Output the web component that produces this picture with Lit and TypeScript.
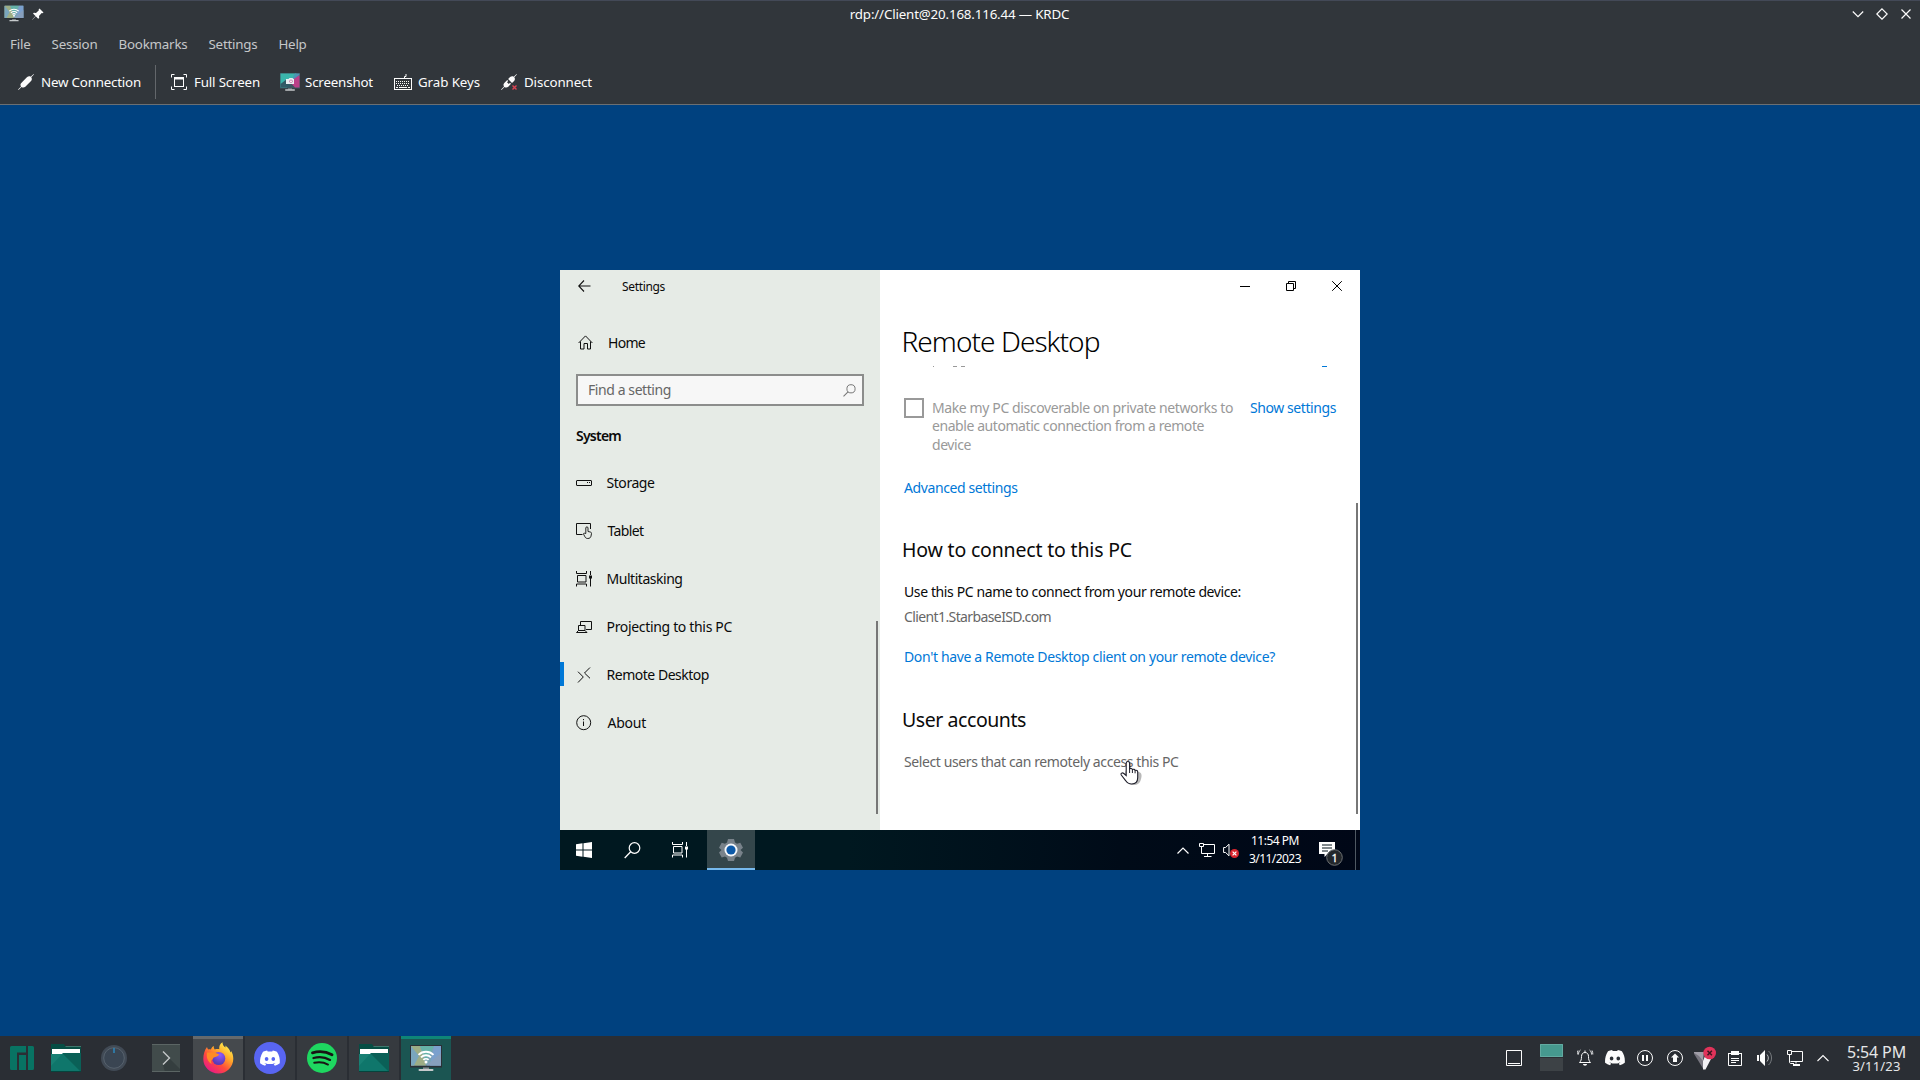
import { LitElement, html, css, svg } from "lit";
import { customElement, property } from "lit/decorators.js";

/* A single line of text whose tracking is adjusted so it spans a given width. */
@customElement("fit-label")
class FitLabel extends LitElement {
  @property({ type: Number }) w = 0;
  @property() text = "";
  static styles = css`
    :host { display: block; white-space: pre; flex: none; }
    .t { display: inline-block; }
  `;
  render() {
    return html`<span class="t">${this.text}</span>`;
  }
  updated() {
    const t = this.renderRoot.querySelector(".t") as HTMLElement;
    t.style.letterSpacing = "0px";
    const n = this.text.length;
    const natural = t.getBoundingClientRect().width;
    this.style.width = this.w + "px";
    t.style.letterSpacing = ((this.w - natural) / n).toFixed(3) + "px";
  }
}

const label = (text: string, w: number, cls = "") =>
  html`<fit-label class=${cls} .text=${text} .w=${w}></fit-label>`;

const icon = (w: number, h: number, body: unknown, cls = "") =>
  html`<svg class="ic ${cls}" width=${w} height=${h} viewBox="0 0 ${w} ${h}" fill="none">${body}</svg>`;

/* ---- host window icons ---- */
const screenBody = svg`
  <rect x="0" y="0" width="32" height="22.5" fill="#2b3036"/>
  <rect x="1" y="1" width="30" height="19.5" fill="#79a4b4"/>
  <path d="M1 1h9l6 19.500H1z" fill="#9dad85"/><path d="M1 1l8 10-5 9.500H1z" fill="#7aa6bd"/>
  <path d="M10 1h14l-8 14z" fill="#65b2a8"/><path d="M24 1h7v19.500H20z" fill="#7ba0cd"/><path d="M31 8v12.500H16z" fill="#879fbd"/>
  <g stroke="#fff" stroke-width="1.900" fill="none"><path d="M8.500 9.800a10.600 10.600 0 0 1 15 0"/><path d="M11 12.400a7 7 0 0 1 10 0"/><path d="M13.400 14.900a3.700 3.700 0 0 1 5.200 0"/></g>
  <circle cx="16" cy="17" r="1.500" fill="#fff"/>
  <rect x="13" y="22.500" width="6" height="2" fill="#8b9094"/><rect x="8.500" y="24" width="15" height="2" rx="1" fill="#c6cacc"/>`;
const appIcon = html`<svg class="ic" width="20" height="17" viewBox="0 0 32 27">${screenBody}</svg>`;
const appIconBig = html`<svg class="ic" width="32" height="27" viewBox="0 0 32 27">${screenBody}</svg>`;
const pin = icon(12, 12, svg`<path d="M7.500.5l4 4-1 .8-.8-.2L7 8l.2 2-1 .8L3.700 8.300.5 11.700.3 11.500 3.500 8 1 5.600l.9-.9L4 5l2.900-2.800-.3-.8z" fill="#fcfcfc"/>`);
const plug = svg`<path d="M15.600.1L15.900.4 13.300 3.200C14.300 5 13.800 6.300 12.800 7.300L7.300 12.700C6 13.800 4.700 13.700 3.500 12.900L.5 15.900.1 15.500 3 12.400C2.200 11 2.300 10 3.300 8.900L8.900 3.300C10 2.300 11.400 2 12.700 2.700z" fill="#fcfcfc"/>`;
const plugIcon = icon(16, 16, plug);
const unplugIcon = icon(17, 16, svg`<path d="M15.600.1l.3.300-2.600 2.800c1 1.600.7 2.900-.2 3.900L11 9 7.100 5.100l2-2c1.200-1 2.400-1.100 3.600-.4zM6.200 6l1 1L6 8.200 7.800 10 9 8.800l1 1-2.700 2.900C6 13.800 4.700 13.700 3.500 12.900L.5 15.900.1 15.500 3 12.400C2.200 11 2.300 10 3.300 8.900z" fill="#fcfcfc"/><path d="M11.500 11.500l4 4m0-4l-4 4" stroke="#da4453" stroke-width="1.400"/>`);
const fullIcon = icon(16, 16, svg`<path d="M.5 3.500v-3h3M12.500.5h3v3M15.500 12.500v3h-3M3.500 15.500h-3v-3" stroke="#fcfcfc"/><path d="M3 3h10v10H3zM4 5.500h8V12H4z" fill="#fcfcfc" fill-rule="evenodd"/>`);
const shotIcon = icon(20, 18, svg`<rect width="20" height="15.500" fill="#3f5560"/><path d="M.5.500h16L7 14.500H.5z" fill="#3ab5ab"/><path d="M.5 14.500V11L7 6l4 8.500z" fill="#315a66"/><path d="M19.500 2v12.500H15L9 8z" fill="#bb3f88"/><path d="M19.500.5V2L11 8 15 .5z" fill="#4d94b4"/><path d="M6 6h2.500l1-1h3l1 1H14v5H6z" fill="#e9eef2"/><circle cx="11" cy="8.300" r="1.800" fill="#c486ae"/><circle cx="11" cy="8.300" r=".9" fill="#fff"/><rect x="8" y="15.500" width="4" height="1" fill="#9a9fa2"/><rect x="5" y="16.200" width="10" height="1.600" rx=".8" fill="#c4c8ca"/>`);
const keysIcon = icon(18, 16, svg`<path d="M10.500 5V2.500h1.500V0" stroke="#fcfcfc"/><rect x=".5" y="4.500" width="17" height="11" stroke="#fcfcfc"/><path d="M2 7.500h14M2 9.500h14M3 11.500h12" stroke="#fcfcfc" stroke-dasharray="1 1"/><path d="M2 13.500h2M5 13.500h8M14 13.500h2" stroke="#fcfcfc"/>`);

/* ---- guest icons ---- */
const homeIcon = icon(16, 15, svg`<path d="M.6 8L7.500.9 14.400 8M2.500 6.500v7.500h3.500V8.500h3.500V14H12.500V6.500" stroke="#111"/>`);
const storageIcon = icon(16, 6, svg`<rect x=".5" y=".5" width="15" height="5" rx=".5" stroke="#111"/><path d="M11 2.500h1M13 2.500h1" stroke="#111"/>`);
const tabletIcon = icon(16, 16, svg`<path d="M6.500 11.500h-6V.5h14V6" stroke="#111"/><path d="M9.800 10.500V5a1.100 1.100 0 0 1 2.200 0v3.500l2.300.5c.9.200 1.300.8 1.200 1.600l-.5 2.500c-.3 1.400-1.200 2.400-3.200 2.400-1.800 0-2.500-.9-3.200-2.300l-1-2c-.4-1.100.8-1.400 1.300-.7z" stroke="#111" stroke-width=".9"/>`);
const taskView = (c: string) => icon(16, 16, svg`<path d="M.5 0v2.500h10V0M.5 15.500v-2.500h10v2.500M1.500 4.500h8.500v6.500h-8.500zM14.500 0v4M14.500 7v8.500" stroke=${c}/><rect x="13" y="4.500" width="3" height="3" fill=${c}/>`);
const projectIcon = icon(16, 12, svg`<path d="M4.500 4.500v-4h11v8H10M2.500 4.500h6.500v5h-6.500zM.5 11.500l2-2H9l2 2z" stroke="#111"/>`);
const remoteIcon = icon(16, 16, svg`<path d="M14 .5L8.500 6l5.500 5.300M2 4.700l5.300 5.300L2 15.500" stroke="#111"/>`);
const aboutIcon = icon(16, 16, svg`<circle cx="7.700" cy="7.700" r="7" stroke="#111"/><path d="M7.500 6.500V11M7.500 4v1.200" stroke="#111"/>`);

const folder = html`<svg class="ic" width="30" height="28" viewBox="0 0 30 28">
  <path d="M0 0h13l2 3h15v7H0z" fill="#064d44"/><path d="M14.500 2.500H30" stroke="#3f776d"/>
  <rect x="1" y="5" width="28" height="5" fill="#fff"/>
  <path d="M0 10h11l1.500-1h17.500V28H0z" fill="#0f766b"/><path d="M11 10l1.500-1h17.500V28L12 10z" fill="#0a6057"/><path d="M0 10h11l-11 12z" fill="#188074"/><path d="M0 27.500h30" stroke="#05443d"/></svg>`;

const discordPath = svg`<path d="M16.900 1.300A16.500 16.500 0 0 0 12.800 0l-.6 1.100a15.300 15.300 0 0 0-4.500 0L7.100 0C5.700.2 4.300.7 3 1.300.5 5.200-.2 9 .1 12.700a16.600 16.600 0 0 0 5 2.600l1.100-1.700-1.700-.9.400-.3a11.800 11.800 0 0 0 10.100 0l.4.300-1.700.9 1.100 1.700a16.500 16.500 0 0 0 5-2.600c.4-4.400-.700-8.100-2.900-11.400zM6.600 10.400c-1 0-1.800-.9-1.800-2s.8-2 1.800-2 1.800.9 1.800 2-.8 2-1.800 2zm6.700 0c-1 0-1.800-.9-1.800-2s.8-2 1.800-2 1.800.9 1.800 2-.8 2-1.800 2z"/>`;
const trayStroke = "#fcfcfc";

@customElement("guest-desktop")
class GuestDesktop extends LitElement {
  static styles = css`
    :host { display: flex; flex-direction: column; width: 800px; height: 600px; position: relative;
      font: 14px "Noto Sans", "Open Sans", sans-serif; color: #0a0a0a; background: #fff; overflow: hidden; }
    .ic { display: block; flex: none; }
    .app { display: flex; height: 560px; }
    .side { width: 320px; background: #e6ebe6; position: relative; line-height: 20px; }
    .caption { display: flex; height: 33px; align-items: center; font-size: 12px; padding-left: 18px; gap: 31px; }
    .caption .ic { margin-bottom: 2px; }
    .row { display: flex; height: 48px; align-items: center; padding-left: 16px; box-sizing: border-box; position: relative; }
    .slot { width: 30.500px; flex: none; }
    .home { margin-top: 16px; padding-left: 18px; }
    .home .slot { width: 30px; padding-bottom: 2px; }
    .current::before { content: ""; position: absolute; left: 0; top: 11px; width: 4px; height: 24px; background: #0078d7; }
    .nudge { padding-left: 1px; }
    .search { display: flex; align-items: center; justify-content: space-between; margin: 7px 16px 0; height: 32px; box-sizing: border-box;
      border: 2px solid #8c8d8c; background: #f7f7f7; padding: 0 6px 0 10px; color: #666; }
    .group { height: 47px; margin-top: 6px; padding-left: 16px; display: flex; align-items: center; font-weight: 600; }
    .main { width: 480px; position: relative; }
    .controls { display: flex; height: 32px; align-items: center; justify-content: flex-end; gap: 36px; padding-right: 18px; }
    h1 { margin: 21px 0 7px 21.500px; height: 36px; line-height: 36px; font-size: 28px; font-weight: 300; color: #000; }
    h2 { margin: 38px 0 0 22px; height: 28px; line-height: 28px; font-size: 19.500px; font-weight: 400; }
    .p { line-height: 20px; margin-left: 24px; }
    .link { color: #0078d7; }
    .dim { color: #666; }
    .option { display: flex; margin: 31px 0 0 24px; height: 56px; line-height: 18.600px; color: #999; }
    .box { width: 20px; height: 20px; box-sizing: border-box; border: 2px solid #999; margin-right: 8px; flex: none; }
    .lines { width: 318px; padding-top: .6px; }
    .option > .link { padding-top: .6px; }
    .m23 { margin-top: 23.500px; } .m18 { margin-top: 18px; } .m5 { margin-top: 5.500px; } .m20 { margin-top: 20px; } .m19 { margin-top: 19px; }
    h2.second { margin-top: 39px; }
    .thumb { position: absolute; right: 2px; width: 2px; background: #777; bottom: 16px; }
    .tall { height: 311px; } .short { height: 193px; }
    .bar { height: 40px; display: flex; align-items: center; background: linear-gradient(90deg, #001820 0, #001820 36%, #000f1b 60%, #000b18 70%, #000717 100%); color: #fff; }
    .btn { width: 48px; height: 40px; display: flex; align-items: center; justify-content: center; }
    .btns { display: flex; width: 147px; }
    .on { background: #34464b; box-shadow: inset 0 -2px #76b9ed; }
    .tray { margin-left: auto; display: flex; align-items: center; height: 40px; }
    .clock { width: 52px; margin: 0 18px 0 10px; font-size: 12px; line-height: 18px; display: flex; flex-direction: column; align-items: center; }
    .note { margin-top: 6px; }
    .peek { width: 4px; height: 40px; border-left: 1px solid #4e5862; margin-left: 12px; }
    .gap1 { margin-right: 10px; } .gap2 { margin-right: 8px; }
    .cursor { position: absolute; left: 559px; top: 490px; }
  `;
  render() {
    const nav = [
      ["Storage", 48, storageIcon, ""], ["Tablet", 36, tabletIcon, "nudge"], ["Multitasking", 76, taskView("#111"), ""],
      ["Projecting to this PC", 125.500, projectIcon, ""], ["Remote Desktop", 102.500, remoteIcon, ""], ["About", 38.500, aboutIcon, "nudge"],
    ] as [string, number, unknown, string][];
    return html`
      <div class="app">
        <div class="side">
          <div class="caption">${icon(13, 12, svg`<path d="M12.500 6H.8M6 .5L.7 6 6 11.500" stroke="#111" stroke-width="1.100"/>`)}${label("Settings", 43)}</div>
          <div class="row home"><span class="slot">${homeIcon}</span>${label("Home", 37)}</div>
          <div class="search">${label("Find a setting", 83)}${icon(13, 13, svg`<circle cx="8" cy="4.800" r="4.100" stroke="#777"/><path d="M5 7.800L.5 12.300" stroke="#777" stroke-width="1.100"/>`)}</div>
          <div class="group">${label("System", 45)}</div>
          ${nav.map(([t, w, i, c]) => html`<div class="row ${t === "Remote Desktop" ? "current" : ""}"><span class="slot">${i}</span>${label(t, w, c)}</div>`)}
          <div class="thumb short"></div>
        </div>
        <div class="main">
          <div class="controls">
            ${icon(10, 10, svg`<path d="M0 5.500h10" stroke="#000"/>`)}
            ${icon(10, 10, svg`<path d="M.5 2.500h7v7h-7zM2.500 2.500v-2h7v7h-2" stroke="#000"/>`)}
            ${icon(10, 10, svg`<path d="M.2.2l9.600 9.600M9.800.2L.2 9.800" stroke="#000"/>`)}
          </div>
          <h1>${label("Remote Desktop", 198)}</h1>
          ${icon(480, 1, svg`<path d="M53 .5h1M73 .5h4M81 .5h4" stroke="#999"/><path d="M442 .5h5" stroke="#0078d7"/>`)}
          <div class="option">
            <div class="box"></div>
            <div class="lines">${label("Make my PC discoverable on private networks to", 301)}${label("enable automatic connection from a remote", 272)}${label("device", 39)}</div>
            ${label("Show settings", 86, "link")}
          </div>
          <div class="p link m23">${label("Advanced settings", 113.500)}</div>
          <h2>${label("How to connect to this PC", 230)}</h2>
          <div class="p m18">${label("Use this PC name to connect from your remote device:", 337)}</div>
          <div class="p dim m5">${label("Client1.StarbaseISD.com", 147)}</div>
          <div class="p link m20">${label("Don't have a Remote Desktop client on your remote device?", 371)}</div>
          <h2 class="second">${label("User accounts", 124)}</h2>
          <div class="p dim m18">${label("Select users that can remotely access this PC", 274.500)}</div>
          <div class="thumb tall"></div>
        </div>
      </div>
      <div class="bar">
        <div class="btns">
          <div class="btn">${icon(16, 16, svg`<path d="M0 2.300L6.500 1.300V7.500H0zM7.500 1.200L16 0v7.500H7.500zM0 8.500h6.500v6.200L0 13.700zM7.500 8.500H16V16l-8.500-1.200z" fill="#fff"/>`)}</div>
          <div class="btn">${icon(17, 17, svg`<circle cx="10.500" cy="6" r="5.300" stroke="#fff" stroke-width="1.200"/><path d="M6.700 9.800L.7 16" stroke="#fff" stroke-width="1.300"/>`)}</div>
          <div class="btn">${taskView("#fff")}</div>
        </div>
        <div class="btn on">${icon(24, 24, svg`<path d="M9 1h6l1 3.500 2 1.200 3.300-1 2.700 5-2.500 2.300 2.500 2.500-2.700 5-3.300-1-2 1.200-1 3.300H9l-1-3.300-2-1.200-3.300 1-2.700-5L2.500 12 0 9.700l2.700-5 3.300 1 2-1.200z" fill="#78828a"/><circle cx="12" cy="12" r="6.500" fill="#f4f7fa"/><circle cx="12" cy="12" r="4.600" fill="#0b59a8"/>`)}</div>
        <div class="tray">
          <span class="gap1">${icon(12, 7, svg`<path d="M.5 6.500L6 1l5.500 5.500" stroke="#fff" stroke-width="1.200"/>`)}</span>
          <span class="gap2">${icon(16, 14, svg`<path d="M5 1.500h10.500v9h-13V6M8.500 10.500v3M5 13.500h7.500M.5.500h4v3h-4zM2.500 3.500v3" stroke="#fff"/>`)}</span>
          ${icon(16, 16, svg`<path d="M.6 5.500h2L6 2.200v11.600l-3.400-3.300h-2z" stroke="#fff"/><circle cx="11.500" cy="11.500" r="4.500" fill="#d9252e"/><path d="M9.600 9.600l3.800 3.800m0-3.800l-3.800 3.800" stroke="#fff" stroke-width="1.200"/>`)}
          <div class="clock">${label("11:54 PM", 48)}${label("3/11/2023", 52)}</div>
          <svg class="ic note" width="24" height="26" viewBox="0 0 24 26"><path d="M0 2h16v12H8.500l-3 3v-3H0z" fill="#fff"/><path d="M3 5h10M3 8h10M3 11h6" stroke="#001018"/><circle cx="15.500" cy="17.500" r="7.800" fill="#23272b" stroke="#6c7073"/><text x="15.600" y="21.500" text-anchor="middle" font-size="11" font-family="Noto Sans" fill="#fff" stroke="#fff" stroke-width=".3">1</text></svg>
          <div class="peek"></div>
        </div>
      </div>
      <svg class="cursor" width="26" height="28" viewBox="0 0 26 28"><path d="M9 3c2-1 3 0 3 2v5l8 2c3 1 3 4 2 7-1 4-3 6-8 6-4 0-6-4-9-9z" fill="#000" opacity=".28"/><path d="M7.200 15.500V3.200c0-2.200 3.400-2.200 3.400 0v5.600c1-.7 2.400-.3 2.800.7 1.100-.6 2.400 0 2.700.9 1.500-.4 2.600.3 2.600 1.700v5.500c0 4-2.400 6.400-6 6.400-3 0-4.600-1-5.900-3.200L2.300 15c-.9-1.700 1-2.800 2.500-1.500z" fill="#fff" stroke="#20202c" stroke-width="1.100"/><path d="M10.600 9v4M13.400 9.600V13M16.100 10.500V13.300" stroke="#20202c"/></svg>
    `;
  }
}

@customElement("app-root")
class AppRoot extends LitElement {
  static styles = css`
    :host { display: flex; flex-direction: column; width: 1920px; height: 1080px; overflow: hidden;
      background: #00417f; font: 13.330px "Noto Sans", sans-serif; color: #fcfcfc; }
    .ic { display: block; flex: none; }
    .chrome { height: 105px; box-sizing: border-box; background: #31363b; border-top: 1px solid #434957; border-bottom: 1px solid #6b6f72; }
    .title { height: 25px; display: grid; grid-template-columns: 1fr auto 1fr; align-items: center; padding: 0 8px 0 4px; }
    .name { padding-left: 3px; }
    .left { display: flex; align-items: center; gap: 8px; }
    .right { display: flex; align-items: center; justify-content: flex-end; gap: 12px; }
    .menu { height: 36px; display: flex; align-items: center; color: #c5c7c9; padding-left: 10px; gap: 21px; }
    .tools { height: 40px; display: flex; align-items: center; padding-left: 18px; }
    .tool { display: flex; align-items: center; gap: 7px; margin-right: 20px; }
    .mid { gap: 6px; margin-right: 21px; }
    .tight { gap: 5px; margin-right: 21px; }
    .sep { width: 1px; height: 34px; background: #63676b; margin: 0 15px 0 -6px; }
    .view { flex: 1; display: flex; justify-content: center; padding-top: 165px; box-sizing: border-box; }
    .panel { height: 44px; background: #2a2e34; display: flex; align-items: center; }
    .launch { display: flex; align-items: center; width: 193px; box-sizing: border-box; padding-left: 10px; }
    .tasks { display: flex; gap: 2px; }
    .task { width: 50px; height: 44px; box-sizing: border-box; background: #363a3f; display: flex; align-items: center; justify-content: center; }
    .grey { background: #45494d; box-shadow: inset 0 3px #65696c; }
    .teal { background: #1b5552; box-shadow: inset 0 3px #0e8577; }
    .s1 { margin-right: 17px; } .s2 { margin-right: 20px; } .s3 { margin-right: 25px; }
    .tray { margin-left: auto; display: flex; align-items: center; }
    .clock { width: 59px; margin: 0 14px 0 18px; display: flex; flex-direction: column; align-items: center; color: #e6e7e8; }
    .time { font-size: 16px; line-height: 20px; padding-top: 1px; }
    .date { font-size: 13px; line-height: 12px; margin: -2px 0 3px; }
  `;
  render() {
    const menus: [string, number][] = [["File", 20.500], ["Session", 46], ["Bookmarks", 69], ["Settings", 49], ["Help", 28]];
    return html`
      <div class="chrome">
        <div class="title">
          <div class="left">${appIcon}${pin}</div>
          <div class="name">${label("rdp://Client@20.168.116.44 — KRDC", 219.500)}</div>
          <div class="right">
            ${icon(12, 12, svg`<path d="M.8 3.500L6 8.700l5.200-5.200" stroke="#fcfcfc" stroke-width="1.200"/>`)}
            ${icon(12, 12, svg`<path d="M6 .8L11.200 6 6 11.200.8 6z" stroke="#fcfcfc" stroke-width="1.200"/>`)}
            ${icon(12, 12, svg`<path d="M1.500 1.500l9 9m0-9l-9 9" stroke="#fcfcfc" stroke-width="1.200"/>`)}
          </div>
        </div>
        <div class="menu">${menus.map(([t, w]) => label(t, w))}</div>
        <div class="tools">
          <div class="tool">${plugIcon}${label("New Connection", 100)}</div>
          <div class="sep"></div>
          <div class="tool">${fullIcon}${label("Full Screen", 66)}</div>
          <div class="tool tight">${shotIcon}${label("Screenshot", 68)}</div>
          <div class="tool mid">${keysIcon}${label("Grab Keys", 62)}</div>
          <div class="tool mid">${unplugIcon}${label("Disconnect", 68)}</div>
        </div>
      </div>
      <div class="view"><guest-desktop></guest-desktop></div>
      <div class="panel">
        <div class="launch">
          <span class="s1">${icon(24, 24, svg`<path d="M1.500 0H16v6.500H7V24H1.500A1.500 1.500 0 0 1 0 22.500v-21A1.500 1.500 0 0 1 1.500 0zM18 0h4.500A1.500 1.500 0 0 1 24 1.500v21a1.500 1.500 0 0 1-1.500 1.500H18zM9 9h7v15H9z" fill="#087363"/>`)}</span>
          <span class="s2">${folder}</span>
          <span class="s3">${icon(26, 26, svg`<circle cx="13" cy="13" r="13" fill="#414a55"/><circle cx="13" cy="13" r="10.300" fill="#3a4552" stroke="#5d6873" stroke-width=".8"/><path d="M13 3v5" stroke="#2d84b8" stroke-width="1.600"/>`)}</span>
          ${icon(28, 28, svg`<rect width="28" height="28" fill="#414b4b"/><path d="M17 14L28 25v3H13l-2-7z" fill="#353e3f"/><path d="M0 .5h28M0 27.500h28" stroke="#5b6564"/><path d="M11 7.500l6.500 6.500-6.500 6.500" stroke="#c3c7c8" stroke-width="1.400"/>`)}
        </div>
        <div class="tasks">
          <div class="task grey"><svg class="ic" width="31" height="32" viewBox="0 0 31 32">
            <defs><linearGradient id="fx" x1="26" y1="3" x2="6" y2="29" gradientUnits="userSpaceOnUse"><stop offset="0" stop-color="#fff44f"/><stop offset=".35" stop-color="#ffa52a"/><stop offset=".65" stop-color="#ff4a3c"/><stop offset="1" stop-color="#e91a86"/></linearGradient><radialGradient id="gl" cx="17" cy="13" r="9" gradientUnits="userSpaceOnUse"><stop offset="0" stop-color="#9059ff"/><stop offset="1" stop-color="#5b3bb5"/></radialGradient></defs>
            <path d="M4 5c.2 1 .6 1.800 1.200 2.400.9-.2 1.800-.2 2.700.1C8.600 5.500 9.500 4.500 10.800 4c-.2 1.300.2 2.500 1 3.400 1.200-.4 3-.6 4.500-.2C15.800 4.500 17 1.800 19.500.3c-.1 2.400 1 3.700 3 5.300.1-.9 0-1.500-.2-2.200C25.500 5.800 27 8.200 27.500 10.500c.4-.5.6-1 .6-1.600 1.400 2 2.200 5 2.200 7.800C30.300 25 23.700 31.500 15.400 31.500S.3 25 .3 17C.3 12 1.800 7.800 4 5z" fill="url(#fx)"/>
            <circle cx="15.700" cy="16.500" r="6.600" fill="url(#gl)"/><path d="M4 10.500c3 .3 5-.5 8 .2 2 .5 3.600 1.300 4.300 1.800-.9 1.700-2.700 2.300-4.800 2.700-1.200.3-1.800 1.300-1.700 2.400C8 17.500 7.500 20 9 22c-4-2-6-6-5-11.500z" fill="#ff8b25"/></svg></div>
          <div class="task">${icon(32, 32, svg`<circle cx="16" cy="16" r="16" fill="#5865f2"/><g transform="translate(6 8.500)" fill="#fff">${discordPath}</g>`)}</div>
          <div class="task">${icon(30, 30, svg`<circle cx="15" cy="15" r="15" fill="#1ed760"/><path d="M5.500 9.800c6.500-1.800 13.500-1.300 19.500 2" stroke="#191414" stroke-width="2.800" stroke-linecap="round"/><path d="M6.500 15c5.500-1.500 11.500-1 16.500 1.900" stroke="#191414" stroke-width="2.300" stroke-linecap="round"/><path d="M7.200 19.800c5-1.100 9.500-.7 13.800 1.800" stroke="#191414" stroke-width="1.900" stroke-linecap="round"/>`)}</div>
          <div class="task">${folder}</div>
          <div class="task teal">${appIconBig}</div>
        </div>
        <div class="tray">
          ${icon(34, 28, svg`<path d="M.5 6.500h15v15H.5zM2 19.500h12" stroke=${trayStroke}/>`)}
          ${icon(37, 28, svg`<rect y="0" width="23" height="13" fill="#46998f"/><path d="M.5.500h22v12H.5z" stroke="#62aaa1"/><rect y="14" width="23" height="13" fill="#3d4246"/>`)}
          ${icon(28, 18, svg`<path d="M2.500 13.500h11c-1.500-1.500-2-3-2-6 0-2.300-1.200-4-3.500-4s-3.500 1.700-3.500 4c0 3-.5 4.500-2 6z" stroke="#fcfcfc"/><path d="M6 15h4c0 2.300-4 2.300-4 0zM7.500 1.500h1v2h-1z" fill="#fcfcfc"/><path d="M3.500 1C2 2 1.500 3.500 1.500 5.500M12.500 1c1.500 1 2 2.500 2 4.500M1 1.500C.3 3 .2 4 .2 5.500M15 1.500c.7 1.500.8 2.500.8 4" stroke="#e5e6e8"/>`)}
          <svg class="ic" width="32" height="16" viewBox="0 0 32 16" fill="#fcfcfc">${discordPath}</svg>
          ${icon(30, 16, svg`<circle cx="8" cy="8" r="7.500" stroke="#fcfcfc"/><path d="M6 5v6M10 5v6" stroke="#fcfcfc" stroke-width="2"/>`)}
          ${icon(27, 16, svg`<circle cx="8" cy="8" r="7.500" stroke="#fcfcfc"/><path d="M8 3.500l4 4H10v4.500H6V7.500H4z" fill="#fcfcfc"/>`)}
          <svg class="ic" width="34" height="24" viewBox="0 0 34 24"><path d="M-1 6h7l3.500 10-.5 6.500z" fill="#77757f"/><path d="M-1 6h11l-1 9-4-5z" fill="#a09ea8"/><path d="M9 15l2-5 7 1-6.500 12.500H9z" fill="#f1f0f4"/><circle cx="15.700" cy="7" r="6.300" fill="#e0335a"/><path d="M13.500 4.800l4.400 4.400m0-4.400l-4.400 4.400" stroke="#3a1520" stroke-width="1.500"/></svg>
          ${icon(29, 17, svg`<path d="M.5 3.500h13v12H.5z" stroke="#fcfcfc"/><rect x="3" y="1" width="8" height="4" fill="#fcfcfc"/><path d="M0 3.500h14M3 8.500h8M3 10.500h8M3 12.500h5" stroke="#fcfcfc"/>`)}
          ${icon(30, 16, svg`<path d="M0 5h2v6H0zM3 5l5-5v16l-5-5z" fill="#fcfcfc"/><path d="M10 4.500c1.800 2 1.800 5 0 7" stroke="#b5b8ba"/><path d="M11.500 1c4 3.500 4 10.500 0 14" stroke="#777b7f"/>`)}
          ${icon(30, 16, svg`<path d="M5 1.500h10.500v10H3.500M.5.500h4v4h-4zM2.500 4.500V12c0 1 .5 1.500 1.500 1.500h3M9 11.500v2" stroke="#fcfcfc"/><path d="M6 14h7v2H6z" fill="#fcfcfc"/>`)}
          ${icon(12, 8, svg`<path d="M.5 7L6 1.500 11.500 7" stroke="#fcfcfc" stroke-width="1.100"/>`)}
          <div class="clock"><div class="time">${label("5:54 PM", 59)}</div><div class="date">${label("3/11/23", 48)}</div></div>
        </div>
      </div>
    `;
  }
}
